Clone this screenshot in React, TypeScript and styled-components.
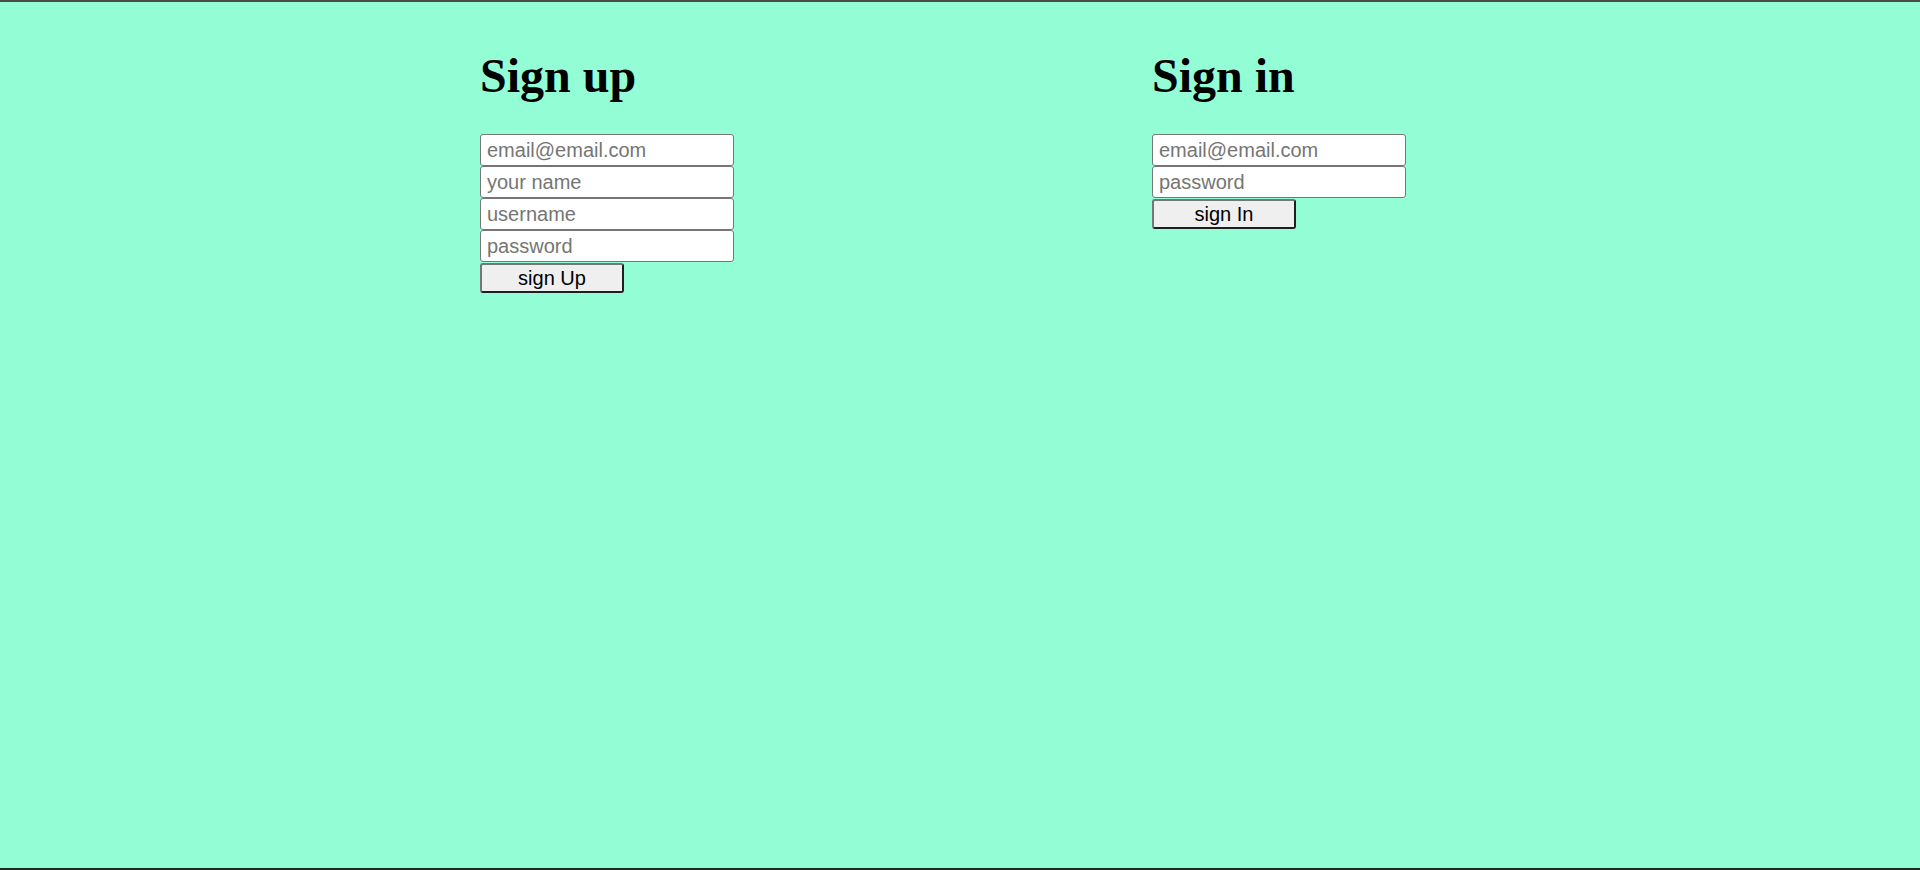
import React from "react";
import styled, { createGlobalStyle } from "styled-components";

const GlobalStyle = createGlobalStyle`
  html, body {
    margin: 0;
    padding: 0;
    background: #93fed6;
  }
  #root {
    min-height: 100vh;
  }
`;

const Page = styled.div`
  box-sizing: border-box;
  min-height: 100vh;
  background: #93fed6;
  border-top: 2px solid #4a4a4a;
  border-bottom: 2px solid #1c2a22;
  display: flex;
  padding: 47px 0 0 480px;
`;

const Column = styled.section`
  width: 672px;
  display: flex;
  flex-direction: column;
  align-items: flex-start;
`;

const Heading = styled.h1`
  font-family: "Liberation Serif", "Times New Roman", serif;
  font-weight: bold;
  font-size: 48px;
  line-height: 53px;
  margin: 0 0 32px;
  color: #000;
`;

const Form = styled.form`
  display: flex;
  flex-direction: column;
  align-items: flex-start;
  margin: 0;
`;

const Input = styled.input`
  box-sizing: border-box;
  width: 254px;
  height: 32px;
  margin: 0;
  padding: 0 6px;
  border: 1px solid #767676;
  border-radius: 3px;
  background: #fff;
  font-family: "Liberation Sans", Arial, sans-serif;
  font-size: 20px;
  color: #000;
  outline: none;
  &::placeholder {
    color: #757575;
  }
`;

const Button = styled.button`
  box-sizing: border-box;
  width: 144px;
  height: 30px;
  margin: 1px 0 0;
  padding: 0;
  border-width: 2px;
  border-style: solid;
  border-color: #767676 #1f1f1f #1f1f1f #767676;
  border-radius: 3px;
  background: #efefef;
  font-family: "Liberation Sans", Arial, sans-serif;
  font-size: 20px;
  color: #000;
  text-align: center;
  cursor: pointer;
`;

export default function App() {
  return (
    <>
      <GlobalStyle />
      <Page>
        <Column>
          <Heading>Sign up</Heading>
          <Form onSubmit={(e) => e.preventDefault()}>
            <Input type="email" placeholder="email@email.com" />
            <Input type="text" placeholder="your name" />
            <Input type="text" placeholder="username" />
            <Input type="password" placeholder="password" />
            <Button type="submit">sign Up</Button>
          </Form>
        </Column>
        <Column>
          <Heading>Sign in</Heading>
          <Form onSubmit={(e) => e.preventDefault()}>
            <Input type="email" placeholder="email@email.com" />
            <Input type="password" placeholder="password" />
            <Button type="submit">sign In</Button>
          </Form>
        </Column>
      </Page>
    </>
  );
}
